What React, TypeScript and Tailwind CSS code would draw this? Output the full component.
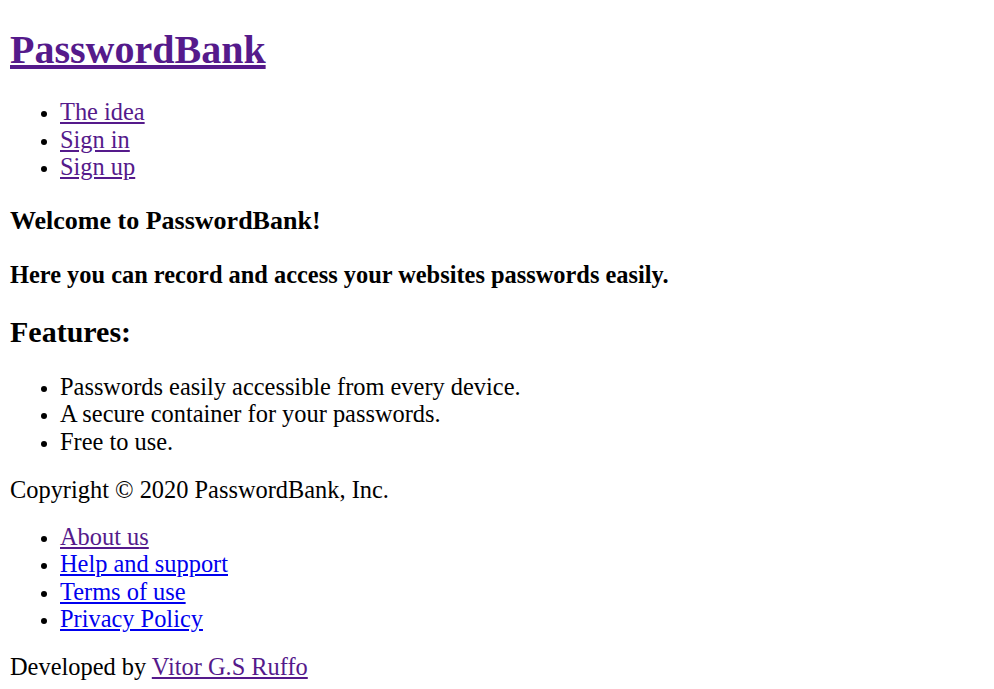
import React from 'react';

const visited = 'text-[#551a8b] underline';
const fresh = 'text-[#0000ee] underline';

const navLinks = ['The idea', 'Sign in', 'Sign up'];

const features = [
  'Passwords easily accessible from every device.',
  'A secure container for your passwords.',
  'Free to use.',
];

const footerLinks = [
  { label: 'About us', seen: true },
  { label: 'Help and support', seen: false },
  { label: 'Terms of use', seen: false },
  { label: 'Privacy Policy', seen: false },
];

const App: React.FC = () => {
  return (
    <div className="flex flex-col px-[10px] bg-white text-black font-['Liberation_Serif',serif] text-[24.4px] leading-[1.15]">
      <header className="flex flex-col">
        <h1 className="mt-[27px] text-[40px] font-bold leading-[46px]">
          <a href="#" className={visited}>PasswordBank</a>
        </h1>
        <ul className="mt-[25px] list-disc pl-[50px] marker:text-[21px]">
          {navLinks.map(l => (
            <li key={l} className="leading-[27.6px]">
              <a href="#" className={visited}>{l}</a>
            </li>
          ))}
        </ul>
      </header>

      <main className="flex flex-col">
        <h3 className="mt-[25px] text-[26px] font-bold leading-[30px]">Welcome to PasswordBank!</h3>
        <h4 className="mt-[25px] text-[24.4px] font-bold leading-[28px]">Here you can record and access your websites passwords easily.</h4>
        <h2 className="mt-[26px] text-[30px] font-bold leading-[34px]">Features:</h2>
        <ul className="mt-[24px] list-disc pl-[50px] marker:text-[21px]">
          {features.map(f => (
            <li key={f} className="leading-[27.6px]">{f}</li>
          ))}
        </ul>
      </main>

      <footer className="flex flex-col">
        <p className="mt-[20px] leading-[28px]">Copyright © 2020 PasswordBank, Inc.</p>
        <ul className="mt-[19px] list-disc pl-[50px] marker:text-[21px]">
          {footerLinks.map(l => (
            <li key={l.label} className="leading-[27.6px]">
              <a href="#" className={l.seen ? visited : fresh}>{l.label}</a>
            </li>
          ))}
        </ul>
        <p className="mt-[20px] leading-[28px]">
          Developed by <a href="#" className={visited}>Vitor G.S Ruffo</a>
        </p>
      </footer>
    </div>
  );
};

export default App;
